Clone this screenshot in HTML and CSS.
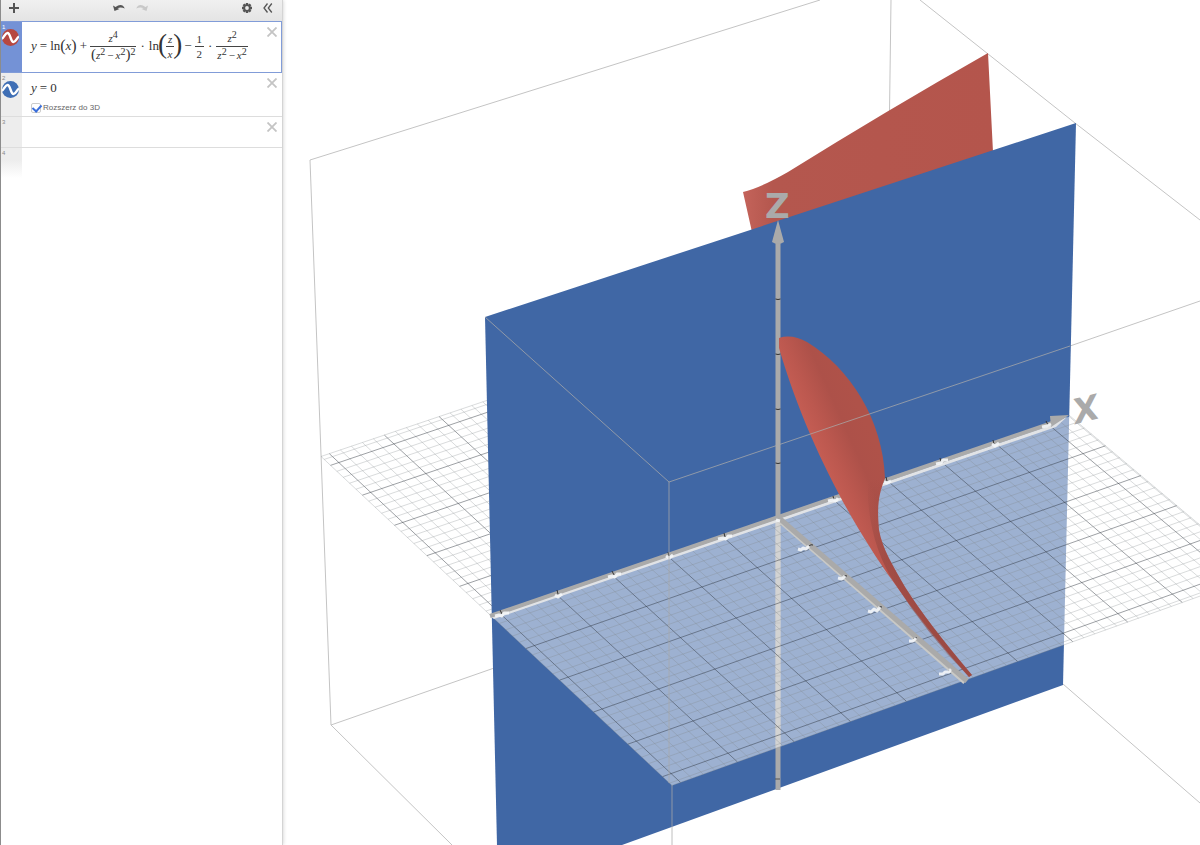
FILE: index.html
```html
<!DOCTYPE html>
<html lang="pl">
<head>
<meta charset="utf-8">
<title>Kalkulator 3D</title>
<meta name="viewport" content="width=device-width, initial-scale=1">
<link rel="stylesheet" href="styles.css">
</head>
<body>
<main class="app">
  <aside class="panel">
    <div class="toolbar">
      <button class="tool" aria-label="Dodaj"><svg width="10" height="10" viewBox="0 0 10 10"><path d="M5 0V10M0 5H10" stroke="#555" stroke-width="2"/></svg></button>
      <span class="spacer"></span>
      <button class="tool" aria-label="Cofnij"><svg width="12" height="8" viewBox="0 0 12 8"><path d="M0 1.500L1.500 7L6.500 5L4.500 4.300Q7.500 2.500 11.800 4.500Q9-1.500 2.500 3Z" fill="#555"/></svg></button>
      <button class="tool" aria-label="Ponów" disabled><svg width="12" height="8" viewBox="0 0 12 8"><path d="M12 1.500L10.500 7L5.500 5L7.500 4.300Q4.500 2.500.2 4.500Q3-1.500 9.500 3Z" fill="#c8c8c8"/></svg></button>
      <span class="spacer"></span>
      <button class="tool" aria-label="Ustawienia"><svg width="10" height="10" viewBox="-5 -5 10 10"><g fill="#555"><circle r="3.800"/><path d="M-1.200-5h2.400V5h-2.400zM-5-1.200v2.400H5v-2.400z"/><path d="M-1.200-5h2.400V5h-2.400zM-5-1.200v2.400H5v-2.400z" transform="rotate(45)"/></g><circle r="1.900" fill="#ebebeb"/></svg></button>
      <button class="tool" aria-label="Ukryj listę"><svg width="10" height="10" viewBox="0 0 10 10"><path d="M4.500.5L1 5L4.500 9.500M8.800.5L5.300 5L8.800 9.500" fill="none" stroke="#555" stroke-width="1.300"/></svg></button>
    </div>
    <ol class="list">
      <li class="row row-selected">
        <div class="gutter"><span class="num">1</span>
          <button class="curve" aria-label="Ukryj wyrażenie 1"><svg width="17" height="17" viewBox="0 0 17 17"><circle cx="8.500" cy="8.500" r="8.500" fill="#b74740"/><path d="M0 9.500C2 9 3 4 5.500 4C8.500 4 8.500 13 11.500 13C14 13 14.500 9 17 7.500" fill="none" stroke="#fff" stroke-width="2.400"/></svg></button>
        </div>
        <div class="expr">
          <div class="math">
            <i>y</i><span class="op">=</span><span>ln</span><span class="par">(</span><i>x</i><span class="par">)</span><span class="op">+</span>
            <span class="frac"><span class="top"><i>z</i><sup>4</sup></span><span class="bottom"><span class="par">(</span><i>z</i><sup>2</sup><span class="minus">−</span><i>x</i><sup>2</sup><span class="par">)</span><sup>2</sup></span></span>
            <span class="dot">·</span><span>ln</span><span class="big">(</span><span class="frac small"><i class="top">z</i><i class="bottom">x</i></span><span class="big">)</span><span class="op">−</span>
            <span class="frac small"><span class="top">1</span><span class="bottom">2</span></span><span class="dot">·</span>
            <span class="frac"><span class="top"><i>z</i><sup>2</sup></span><span class="bottom"><i>z</i><sup>2</sup><span class="minus">−</span><i>x</i><sup>2</sup></span></span>
          </div>
        </div>
        <button class="close" aria-label="Usuń wyrażenie 1"><svg width="10" height="10" viewBox="0 0 10 10"><path d="M.5.5L9.500 9.500M9.500.5L.5 9.500" stroke="#c4c4c4" stroke-width="1.800"/></svg></button>
      </li>
      <li class="row row-extend">
        <div class="gutter"><span class="num">2</span>
          <button class="curve" aria-label="Ukryj wyrażenie 2"><svg width="17" height="17" viewBox="0 0 17 17"><circle cx="8.500" cy="8.500" r="8.500" fill="#3f6fb5"/><path d="M0 9.500C2 9 3 4 5.500 4C8.500 4 8.500 13 11.500 13C14 13 14.500 9 17 7.500" fill="none" stroke="#fff" stroke-width="2.400"/></svg></button>
        </div>
        <div class="expr">
          <div class="math"><i>y</i><span class="op">=</span><span>0</span></div>
          <label class="extend"><input type="checkbox" checked><span>Rozszerz do 3D</span></label>
        </div>
        <button class="close" aria-label="Usuń wyrażenie 2"><svg width="10" height="10" viewBox="0 0 10 10"><path d="M.5.5L9.500 9.500M9.500.5L.5 9.500" stroke="#c4c4c4" stroke-width="1.800"/></svg></button>
      </li>
      <li class="row row-empty">
        <div class="gutter"><span class="num">3</span></div>
        <div class="expr"><input class="entry" type="text" aria-label="Wyrażenie 3"></div>
        <button class="close" aria-label="Usuń wyrażenie 3"><svg width="10" height="10" viewBox="0 0 10 10"><path d="M.5.5L9.500 9.500M9.500.5L.5 9.500" stroke="#c4c4c4" stroke-width="1.800"/></svg></button>
      </li>
      <li class="row row-next">
        <div class="gutter"><span class="num">4</span></div>
      </li>
    </ol>
  </aside>
  <section class="graph" aria-label="Wykres 3D">
    <svg class="scene" viewBox="283 0 917 845" preserveAspectRatio="xMinYMin slice">
      <defs>
        <linearGradient id="leaf" gradientUnits="userSpaceOnUse" x1="808" y1="438" x2="862" y2="414"><stop offset="0" stop-color="#c65e54"/><stop offset=".3" stop-color="#bc584f"/><stop offset=".65" stop-color="#ad5149"/><stop offset="1" stop-color="#af5249"/></linearGradient>
        <linearGradient id="tail" gradientUnits="userSpaceOnUse" x1="870" y1="480" x2="885" y2="560"><stop offset="0" stop-color="#8e443e" stop-opacity="0"/><stop offset="1" stop-color="#8e443e" stop-opacity=".55"/></linearGradient>
        <linearGradient id="sheet" x1="0" x2="1" y1="0" y2="0"><stop offset="0" stop-color="#c4635a"/><stop offset=".12" stop-color="#b4574e"/><stop offset="1" stop-color="#b4554c"/></linearGradient>
      </defs>
      <g class="box">
        <path d="M820 0L310 160L321 454L331 725L452 845M331 725L520 659M891 0L889 150M920 0L1075 123L1200 220M1063 684L1200 803"/>
        <path d="M1070 346L1200 301"/>
      </g>
      <g id="grid-back"></g>
      <path d="M743 192Q760 188 788 172Q886 111 988 53L993 152L752 232Z" fill="url(#sheet)"/>
      <path d="M485 317L1076 123L1063 685L622 845H497Z" fill="#4067a5"/>
      <path d="M778 519V790" stroke="#aaa" stroke-width="5"/>
      <path d="M775 570h5M775 623h5M775 676h5M775 727h5M775 779h5" stroke="#555" stroke-width="1"/>
      <path id="floor" fill="#fff" fill-opacity=".49"/>
      <path d="M778 522V746" stroke="#d3d3d1" stroke-opacity=".7" stroke-width="5"/>
      <g id="grid-front"></g>
      <path d="M491 617L1052 425L1068 416L1056 427L494 619Z" fill="#e1e3e6"/>
      <path d="M490 616L1052 423" stroke="#aaa" stroke-width="4"/>
      <path d="M1050 416L1069 415L1051 427Z" fill="#aaa"/>
      <path d="M778 519L965 682" stroke="#c9c9c6" stroke-width="5"/>
      <path d="M779 518L967 681" stroke="#aaa" stroke-width="5"/>
      <path d="M778 520V242" stroke="#aaa" stroke-width="5"/>
      <path d="M778 220L784 242Q778 246 772 242Z" fill="#aaa"/>
      <path d="M775.500 299q2.500 1 5 0M775.500 354q2.500 1 5 0M775.500 409q2.500 1 5 0M775.500 463q2.500 1 5 0" class="tick"/>
      <path d="M500 610l2 4M557 590l1 4M612 571l2 4M668 552l1 4M724 533l1 4M833 496l1 4M886 477l1 4M940 458l1 4M993 440l1 4M1046 421l2 4" class="tick"/>
      <path d="M809 546q2-2 4-1M843 577q2-2 4-1M878 608q2-2 4-1M913 639q2-2 4-1M948 671q2-2 4-1" class="tick"/>
      <g class="marks">
        <path d="M495 616l4-1 3 1 2-3 5 0M608 577l4-1 3 1 2-3 4 0M718 539l5-1 3 1 2-3 4 0M828 501l5-1 3 1 2-3M936 464l5-1 2-3 5 0M1042 427l5-1 4-2"/>
        <path d="M555 595l3 2 4-3M666 556l3 2 4-3M776 520l4 1M884 482l3 1 4-2M992 444l3 2 4-3"/>
        <path d="M798 549l3 1 2-2 3 1 3-3M838 578l4 1 3-3M868 611l3 1 3-3 3 2 3-4M909 641l4 0 3-3M939 674l4 0 2-2 4 0 2-3"/>
      </g>
      <path d="M779 338C788 335 798 337 807 342C850 368 883 420 885 478C878 496 877 508 879 530C882 548 893 566 905 587Q927 622 972 675L969 677Q925 628 892 580C856 530 808 447 779 348Z" fill="url(#leaf)"/>
      <path d="M885 478C878 496 877 508 879 530C882 548 893 566 905 587Q927 622 972 675L969 677Q925 632 894 582C878 558 866 520 868 480Z" fill="url(#tail)"/>
      <path class="edge" d="M485 317L669 482V783M669 482L1070 346M672 785V845"/>
      <text class="axis-label" x="765" y="218">Z</text>
      <text class="axis-label slanted" transform="translate(1076 424) rotate(-14)">X</text>
    </svg>
  </section>
</main>
<script src="grid.js"></script>
</body>
</html>
```
FILE: styles.css
```css
* { box-sizing: border-box; }
body { margin: 0; font-family: "Liberation Sans", Arial, sans-serif; background: #fff; }
button { border: 0; padding: 0; background: none; display: block; line-height: 0; }
.app { display: flex; height: 100vh; overflow: hidden; }
.panel { flex: none; width: 283px; border-left: 1px solid #8c8c8c; border-right: 1px solid #d4d4d4; box-shadow: 0 0 4px #ccc; z-index: 1; background: #fff; }
.toolbar { display: flex; align-items: center; gap: 11px; height: 21px; padding: 0 9px 6px 8px; background: linear-gradient(#f0f0f0, #e4e4e4); }
.spacer { flex: 1; }
.list { list-style: none; margin: 0; padding: 0; }
.row { display: flex; position: relative; border-bottom: 1px solid #ddd; }
.row-selected { min-height: 52px; border: 1px solid #819cd8; border-left: 0; }
.row-extend { min-height: 44px; }
.row-empty { min-height: 31px; }
.row-next { min-height: 30px; border: 0; }
.gutter { flex: none; width: 21px; background: #ededed; padding: 2px 0 0 1px; }
.row-selected .gutter { background: #7492d6; }
.row-next .gutter { background: linear-gradient(#ededed 40%, #fff); }
.num { display: block; font-size: 6px; line-height: 6px; color: #888; }
.row-selected .num { color: #fff; }
.curve { margin: -1px 0 0; }
.row-extend .curve { margin-top: 0; }
.expr { flex: 1; padding-left: 9px; color: #333; }
.row-selected .expr { display: flex; align-items: center; padding-bottom: 2px; }
.row-extend .expr { padding-top: 7px; }
.close { position: absolute; right: 5px; top: 5px; }
.row-selected .close { right: 4px; }
.entry { width: 200px; border: 0; outline: 0; background: transparent; }
.math { display: flex; align-items: center; white-space: nowrap; font-family: "Liberation Serif", "Times New Roman", serif; font-size: 13px; line-height: 16px; }
.op { margin: 0 3px; }
.dot { margin: 0 4px; }
.minus { margin: 0 2px; }
.par { font-size: 16px; }
.frac { display: flex; flex-direction: column; align-items: center; font-size: 11px; line-height: 13px; }
.frac .par { font-size: 15px; }
.frac sup { font-size: 10px; line-height: 8px; vertical-align: 4px; }
.top { padding: 0 2px 1px; }
.bottom { align-self: stretch; text-align: center; padding: 1px 1px 0; border-top: 1px solid #444; }
.small { font-size: 11px; line-height: 12px; }
.big { font-size: 27px; line-height: 27px; margin: -2px -1px 2px; }
.extend { display: flex; align-items: center; gap: 2px; margin-top: 6px; font-size: 8px; line-height: 11px; color: #666; }
.extend input { appearance: none; width: 10px; height: 10px; margin: 0; border: 1px solid #ccc; border-radius: 2px; position: relative; }
.extend input:checked::after { content: ""; position: absolute; left: 2px; top: -1px; width: 4px; height: 7px; border: solid #3b6fdc; border-width: 0 2px 2px 0; transform: rotate(42deg); }
.graph { flex: 1; min-width: 0; }
.scene { display: block; width: 100%; height: 100%; }
.box path { fill: none; stroke: #c4c4c4; stroke-width: 1; }
.edge { fill: none; stroke: #aaa; stroke-opacity: .75; stroke-width: 1; }
.grid-major { stroke: #282f38; stroke-opacity: .45; stroke-width: 1; }
.grid-minor { stroke: #82878c; stroke-opacity: .3; stroke-width: 1; }
.tick { fill: none; stroke: #333; stroke-width: 1; }
.marks path { fill: none; stroke: #f4f6f8; stroke-width: 3; stroke-linejoin: round; stroke-opacity: .9; }
.axis-label { font: bold 34px "DejaVu Sans", sans-serif; fill: #aaa; }
.slanted { font-size: 34px; font-style: italic; }
```
FILE: grid.js
```js
// Perspective projection of the floor plane; v grows towards the viewer.
const X_MIN = -5.15, X_MAX = 5.42, V_MIN = -5.3, V_MAX = 5.27;

function project(x, v) {
  const w = 1 + 0.00256 * x - 0.0047 * v;
  return [
    ((778 + 56.68 * x + 30.43 * v) / w).toFixed(2),
    ((518 - 17.7 * x + 27.8 * v) / w).toFixed(2)
  ];
}

function addLine(group, from, to, kind) {
  const line = document.createElementNS("http://www.w3.org/2000/svg", "path");
  line.setAttribute("d", "M" + project(...from) + "L" + project(...to));
  line.setAttribute("class", "grid-" + kind);
  group.appendChild(line);
}

function drawGrid(id, vStart, vEnd) {
  const group = document.getElementById(id);
  for (let i = -25; i <= 27; i++) {
    addLine(group, [i / 5, vStart], [i / 5, vEnd], i % 5 ? "minor" : "major");
  }
  for (let i = -26; i <= 26; i++) {
    const v = i / 5;
    if (v < vStart || v > vEnd || i === 0) continue;
    addLine(group, [X_MIN, v], [X_MAX, v], i % 5 ? "minor" : "major");
  }
  for (const x of [X_MIN, X_MAX]) addLine(group, [x, vStart], [x, vEnd], "minor");
  for (const v of [vStart, vEnd]) {
    if (v !== 0) addLine(group, [X_MIN, v], [X_MAX, v], "minor");
  }
}

drawGrid("grid-back", V_MIN, 0);
drawGrid("grid-front", 0, V_MAX);
document.getElementById("floor").setAttribute("d",
  "M" + project(X_MIN, 0) + "L" + project(X_MAX, 0) +
  "L" + project(X_MAX, V_MAX) + "L" + project(X_MIN, V_MAX) + "Z");
```
